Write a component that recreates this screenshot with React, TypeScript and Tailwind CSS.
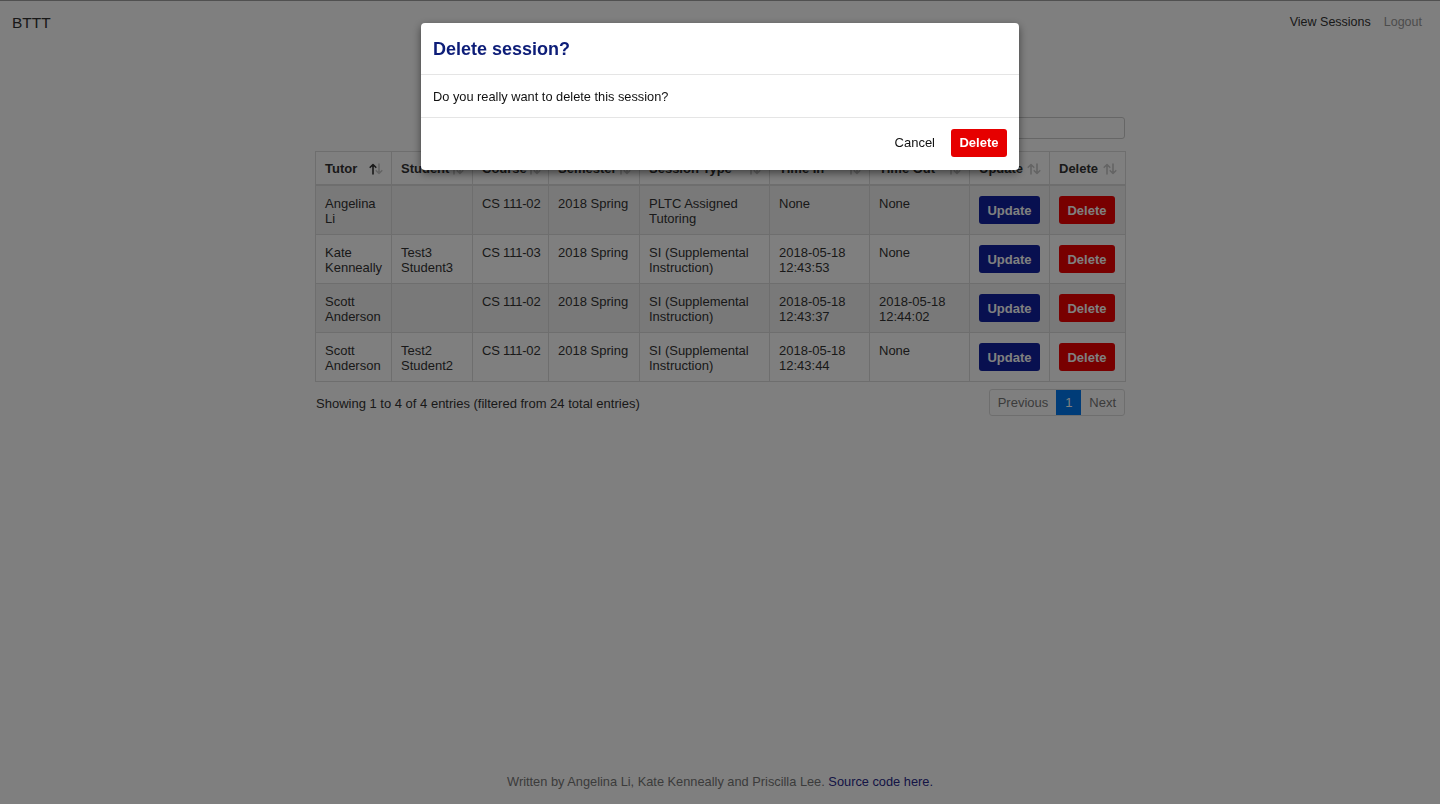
import React from "react";

type Row = {
  tutor: string[];
  student: string[];
  course: string;
  semester: string;
  type: string[];
  timeIn: string[];
  timeOut: string[];
};

const rows: Row[] = [
  {
    tutor: ["Angelina", "Li"],
    student: [],
    course: "CS 111-02",
    semester: "2018 Spring",
    type: ["PLTC Assigned", "Tutoring"],
    timeIn: ["None"],
    timeOut: ["None"],
  },
  {
    tutor: ["Kate", "Kenneally"],
    student: ["Test3", "Student3"],
    course: "CS 111-03",
    semester: "2018 Spring",
    type: ["SI (Supplemental", "Instruction)"],
    timeIn: ["2018-05-18", "12:43:53"],
    timeOut: ["None"],
  },
  {
    tutor: ["Scott", "Anderson"],
    student: [],
    course: "CS 111-02",
    semester: "2018 Spring",
    type: ["SI (Supplemental", "Instruction)"],
    timeIn: ["2018-05-18", "12:43:37"],
    timeOut: ["2018-05-18", "12:44:02"],
  },
  {
    tutor: ["Scott", "Anderson"],
    student: ["Test2", "Student2"],
    course: "CS 111-02",
    semester: "2018 Spring",
    type: ["SI (Supplemental", "Instruction)"],
    timeIn: ["2018-05-18", "12:43:44"],
    timeOut: ["None"],
  },
];

const columns = [
  { name: "Tutor", width: "w-[76px]", active: true },
  { name: "Student", width: "w-[81px]" },
  { name: "Course", width: "w-[76px]" },
  { name: "Semester", width: "w-[91px]" },
  { name: "Session Type", width: "w-[130px]" },
  { name: "Time In", width: "w-[100px]" },
  { name: "Time Out", width: "w-[100px]" },
  { name: "Update", width: "w-[80px]" },
  { name: "Delete", width: "w-[76px]" },
];

function SortIcon({ active }: { active?: boolean }) {
  return (
    <svg width="14" height="12" viewBox="0 0 14 12" className="shrink-0">
      <g fill="none" strokeWidth="1.6" strokeLinecap="round" strokeLinejoin="round">
        <path d="M4 11V1.5M1.2 4.3L4 1.5l2.8 2.8" stroke={active ? "#333333" : "#c8c8c8"} />
        <path d="M10 1v9.5M7.2 7.7L10 10.5l2.8-2.8" stroke="#c8c8c8" />
      </g>
    </svg>
  );
}

function Lines({ items }: { items: string[] }) {
  return (
    <>
      {items.map((t, i) => (
        <div key={i}>{t}</div>
      ))}
    </>
  );
}

const td = "border border-[#dddddd] pl-[9px] pr-2 pt-[10px] pb-[8px] align-top";

export default function App() {
  return (
    <div
      className="relative h-[804px] bg-white border-t border-[#a0a0a0] flex flex-col text-[#333333] text-[13px]"
      style={{ fontFamily: '"Liberation Sans", Arial, sans-serif' }}
    >
      <nav className="h-[43px] flex items-center justify-between pl-3 pr-[18px]">
        <span className="text-[15.5px] text-[#333333]">BTTT</span>
        <div className="flex items-center gap-[13px] text-[12.5px]">
          <a className="text-[#333333]">View Sessions</a>
          <a className="text-[#999999]">Logout</a>
        </div>
      </nav>

      <main className="flex-1">
        <div className="w-[810px] mx-auto mt-[73px]">
          <div className="flex justify-end items-center gap-2 mb-3">
            <label>Search:</label>
            <input className="w-[170px] h-[22px] border border-[#cccccc] rounded-[3px] px-2 outline-none" />
          </div>

          <table className="w-[810px] table-fixed border-collapse border border-[#dddddd] leading-[15px]">
            <colgroup>
              {columns.map((c) => (
                <col key={c.name} className={c.width} />
              ))}
            </colgroup>
            <thead>
              <tr>
                {columns.map((c) => (
                  <th
                    key={c.name}
                    className="border border-[#dddddd] border-b-2 pl-[9px] pr-2 pt-[9px] pb-2 text-left font-bold"
                  >
                    <div className="flex items-center justify-between">
                      <span>{c.name}</span>
                      <SortIcon active={c.active} />
                    </div>
                  </th>
                ))}
              </tr>
            </thead>
            <tbody>
              {rows.map((r, i) => (
                <tr key={i} className={i % 2 === 0 ? "bg-[#f2f2f2]" : "bg-white"}>
                  <td className={td}>
                    <Lines items={r.tutor} />
                  </td>
                  <td className={td}>
                    <Lines items={r.student} />
                  </td>
                  <td className={td + " whitespace-nowrap tracking-[-0.2px]"}>{r.course}</td>
                  <td className={td + " whitespace-nowrap"}>{r.semester}</td>
                  <td className={td}>
                    <Lines items={r.type} />
                  </td>
                  <td className={td}>
                    <Lines items={r.timeIn} />
                  </td>
                  <td className={td}>
                    <Lines items={r.timeOut} />
                  </td>
                  <td className="border border-[#dddddd] px-[9px] pt-[10px] pb-[8px] align-top">
                    <button className="h-[28px] w-[61px] block rounded-[3px] bg-[#1020a0] text-white font-bold">
                      Update
                    </button>
                  </td>
                  <td className="border border-[#dddddd] px-[9px] pt-[10px] pb-[8px] align-top">
                    <button className="h-[28px] w-[56px] block rounded-[3px] bg-[#f00000] text-white font-bold">
                      Delete
                    </button>
                  </td>
                </tr>
              ))}
            </tbody>
          </table>

          <div className="flex items-center justify-between mt-[7px]">
            <span className="pl-px pt-[2px]">Showing 1 to 4 of 4 entries (filtered from 24 total entries)</span>
            <div className="flex h-[27px] border border-[#dddddd] rounded-[3px] overflow-hidden">
              <span className="px-2 flex items-center text-[#777777]">Previous</span>
              <span className="w-[25px] flex items-center justify-center bg-[#0078f0] text-white">1</span>
              <span className="px-2 flex items-center text-[#777777]">Next</span>
            </div>
          </div>
        </div>
      </main>

      <footer className="pb-[13px] text-center text-[#777777] text-[12.8px]">
        Written by Angelina Li, Kate Kenneally and Priscilla Lee.{" "}
        <a className="text-[#2a2a8a]">Source code here.</a>
      </footer>

      <div className="fixed inset-0 bg-black/50">
        <div className="w-[598px] mx-auto mt-[23px] bg-white rounded-[4px] shadow-[0_3px_9px_rgba(0,0,0,0.5)]">
          <div className="h-[52px] px-3 flex items-center border-b border-[#e5e5e5]">
            <h4 className="text-[18px] font-bold text-[#0d1d78] pt-[2px]">Delete session?</h4>
          </div>
          <div className="h-[43px] px-3 pt-px flex items-center border-b border-[#e5e5e5] text-[#111111] text-[12.8px]">
            Do you really want to delete this session?
          </div>
          <div className="h-[52px] px-3 pt-[11px] flex items-start justify-end gap-4">
            <button className="text-[#111111] h-[28px]">Cancel</button>
            <button className="h-[28px] w-[56px] rounded-[3px] bg-[#e60000] text-white font-bold">
              Delete
            </button>
          </div>
        </div>
      </div>
    </div>
  );
}
